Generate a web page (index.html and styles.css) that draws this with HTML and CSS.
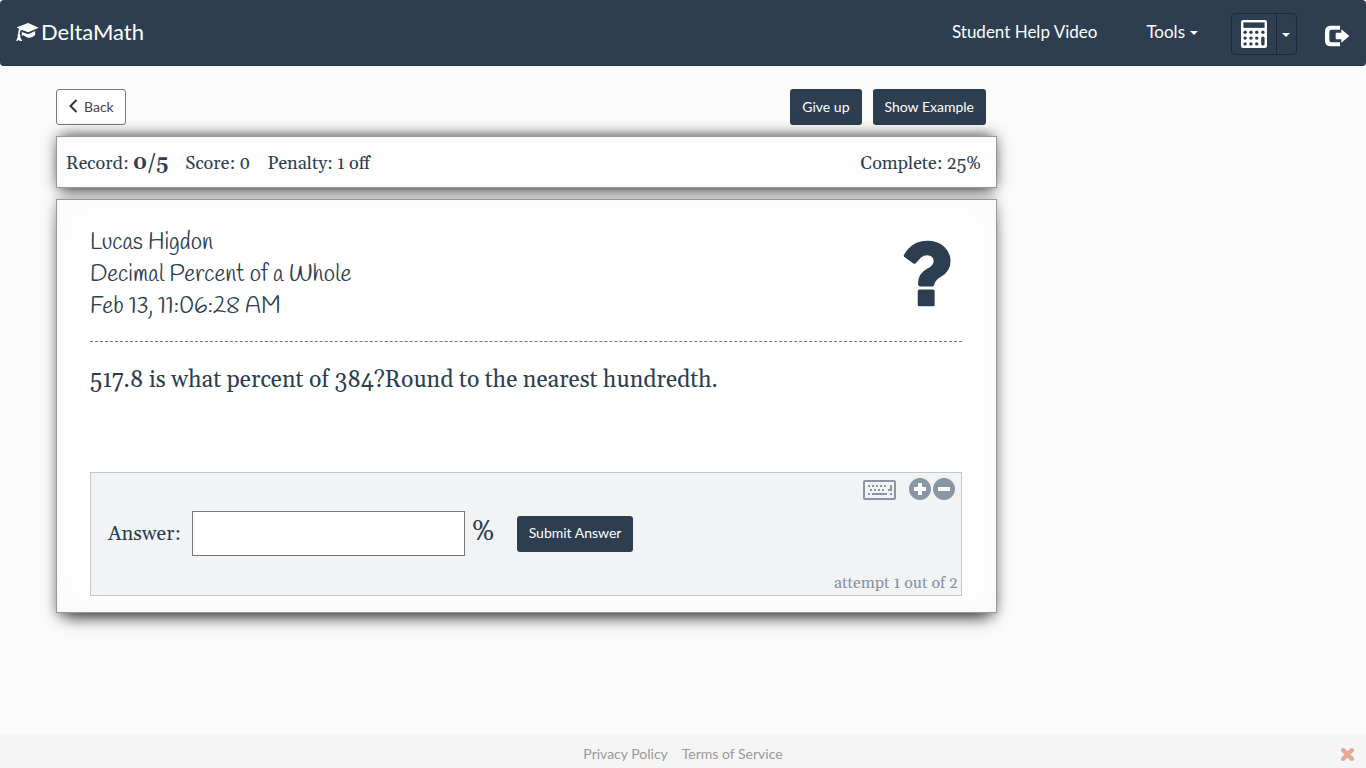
FILE: index.html
```html
<!DOCTYPE html>
<html lang="en">
<head>
    <meta charset="UTF-8">
    <meta name="viewport" content="width=device-width, initial-scale=1.0">
    <title>DeltaMath</title>
    <link rel="stylesheet" href="styles.css">
</head>
<body>
    <nav class="navbar">
        <a class="brand" href="#">
            <svg class="icon-cap" viewBox="0 0 68 54" aria-hidden="true">
                <path d="M36 0L68 14L36 28L20 22L14 22Q10 27 11 34Q15 38 12 42L18 54H11L7 50L4 54H0L5 41Q3 36 6 33Q6 23 9 18L2 13Z"/>
                <path d="M17 27L36 34L57 24V36Q47 46 36 44Q28 42 23 37L17 38Z"/>
            </svg>
            <span>DeltaMath</span>
        </a>
        <div class="nav-right">
            <a class="nav-link" href="#">Student Help Video</a>
            <a class="nav-link nav-tools" href="#">Tools <span class="caret"></span></a>
            <div class="btn-group">
                <button class="calc-btn" type="button" aria-label="Calculator">
                    <svg class="icon-calc" viewBox="0 0 76 82" aria-hidden="true">
                        <rect width="76" height="82" rx="6" fill="#fff"/>
                        <g fill="#2c3e50">
                            <rect x="7" y="7" width="62" height="16"/>
                            <circle cx="12" cy="36" r="5"/><circle cx="29" cy="36" r="5"/><circle cx="46" cy="36" r="5"/><circle cx="64" cy="36" r="5"/>
                            <circle cx="12" cy="53" r="5"/><circle cx="29" cy="53" r="5"/><circle cx="46" cy="53" r="5"/>
                            <circle cx="12" cy="70" r="5"/><circle cx="29" cy="70" r="5"/><circle cx="46" cy="70" r="5"/>
                            <rect x="59" y="48" width="10" height="27" rx="5"/>
                        </g>
                    </svg>
                </button>
                <button class="calc-btn calc-toggle" type="button" aria-label="Calculator options"><span class="caret"></span></button>
            </div>
            <a class="logout" href="#" aria-label="Log out">
                <svg class="icon-logout" viewBox="0 0 76 66" aria-hidden="true">
                    <path d="M47 2H20Q2 2 2 19V47Q2 64 20 64H47V52H22Q15 52 15 45V21Q15 14 22 14H47Z"/>
                    <path d="M51 13L75 33L51 53V43H37Q34 43 34 40V26Q34 23 37 23H51Z"/>
                </svg>
            </a>
        </div>
    </nav>

    <main class="container">
        <div class="toolbar">
            <button class="btn btn-default" type="button">
                <svg class="icon-back" viewBox="0 0 10 14" aria-hidden="true"><path d="M8 1L2 7L8 13"/></svg>
                Back
            </button>
            <div class="toolbar-right">
                <button class="btn btn-primary" type="button">Give up</button>
                <button class="btn btn-primary" type="button">Show Example</button>
            </div>
        </div>

        <section class="panel record">
            <span>Record: <b>0/5</b></span>
            <span>Score: 0</span>
            <span>Penalty: 1 off</span>
            <span class="complete">Complete: 25%</span>
        </section>

        <section class="panel problem">
            <header class="problem-header">
                <div class="student">
                    <div>Lucas Higdon</div>
                    <div>Decimal Percent of a Whole</div>
                    <div>Feb 13, 11:06:28 AM</div>
                </div>
                <svg class="icon-question" viewBox="130 58 144 202" aria-hidden="true">
                    <path d="M132 104Q155 60 203 60Q234 60 254 78Q273 96 273 121Q273 151 245 168Q225 179 224 194Q223 198 218 198H181Q175 198 175 190Q175 159 202 145Q222 135 222 122Q222 106 203 104Q192 104 184 111L168 128Q164 131 160 128L134 109Q131 107 132 104Z"/>
                    <rect x="174" y="207" width="51" height="51" rx="5"/>
                </svg>
            </header>

            <p class="question">517.8 is what percent of 384?Round to the nearest hundredth.</p>

            <form class="answer-box">
                <div class="answer-tools">
                    <button class="tool tool-keyboard" type="button" aria-label="Keyboard">
                        <svg class="icon-keyboard" viewBox="0 0 33 20" aria-hidden="true">
                            <rect x="1" y="1" width="31" height="18" rx="1" fill="none" stroke="#8b96a3" stroke-width="2"/>
                            <path d="M5 6H25M7 10H23M5 14H7M27 14H29" fill="none" stroke="#8b96a3" stroke-width="2" stroke-dasharray="2 2"/>
                            <path d="M9 14H24M28 5V10H25" fill="none" stroke="#8b96a3" stroke-width="2"/>
                        </svg>
                    </button>
                    <button class="tool" type="button" aria-label="Larger text">
                        <svg class="icon-round" viewBox="0 0 22 22" aria-hidden="true"><circle cx="11" cy="11" r="11" fill="#8b96a3"/><path d="M11 5V17M5 11H17" stroke="#fff" stroke-width="4"/></svg>
                    </button>
                    <button class="tool" type="button" aria-label="Smaller text">
                        <svg class="icon-round" viewBox="0 0 22 22" aria-hidden="true"><circle cx="11" cy="11" r="11" fill="#8b96a3"/><path d="M5 11H17" stroke="#fff" stroke-width="4"/></svg>
                    </button>
                </div>
                <div class="answer-row">
                    <label class="answer-label" for="answer">Answer:</label>
                    <input class="answer-input" type="text" id="answer" autocomplete="off">
                    <span class="percent">%</span>
                    <button class="btn btn-primary" type="submit">Submit Answer</button>
                </div>
                <div class="attempt">attempt 1 out of 2</div>
            </form>
        </section>
    </main>

    <footer class="footer">
        <a href="#">Privacy Policy</a>
        <a href="#">Terms of Service</a>
        <button class="footer-close" type="button" aria-label="Close">
            <svg class="icon-close" viewBox="0 0 12 12" aria-hidden="true"><path d="M2 2L10 10M10 2L2 10"/></svg>
        </button>
    </footer>
</body>
</html>
```
FILE: styles.css
```css
* {
    box-sizing: border-box;
}

html {
    background-color: #fff;
}

body {
    margin: 0;
    min-height: 100vh;
    display: flex;
    flex-direction: column;
    font-family: Lato, sans-serif;
    font-size: 14px;
    color: #2c3e50;
    background-color: #fbfbfb;
}

a {
    text-decoration: none;
}

button {
    font-family: Lato, sans-serif;
    cursor: pointer;
}

svg {
    display: block;
}

/* Navbar */
.navbar {
    display: flex;
    align-items: center;
    justify-content: space-between;
    height: 66px;
    padding: 0 16px 2px;
    background-color: #2c3e50;
    border-bottom: 1px solid #22303f;
    border-radius: 4px;
}

.brand {
    display: flex;
    align-items: center;
    gap: 2px;
    font-size: 22px;
    color: #fff;
}

.icon-cap {
    width: 23px;
    height: 18px;
    fill: #fff;
}

.nav-right {
    display: flex;
    align-items: center;
}

.nav-link {
    margin-right: 49px;
    font-size: 17px;
    color: #fff;
}

.nav-tools {
    display: flex;
    align-items: center;
    gap: 5px;
    margin-right: 33px;
}

.caret {
    display: inline-block;
    margin-top: 2px;
    border-top: 4px solid #fff;
    border-left: 4px solid transparent;
    border-right: 4px solid transparent;
}

.btn-group {
    display: flex;
    height: 42px;
    margin: 5px 27px 0 0;
    border: 1px solid #1c2938;
    border-radius: 4px;
}

.calc-btn {
    display: flex;
    align-items: center;
    padding: 0 9px;
    background: none;
    border: none;
}

.calc-toggle {
    padding: 0 6px 0 5px;
    border-left: 1px solid #1c2938;
}

.icon-calc {
    width: 26px;
    height: 28px;
}

.logout {
    margin-top: 9px;
}

.icon-logout {
    width: 26px;
    height: 22px;
    fill: #fff;
}

/* Page */
.container {
    flex: 1;
    width: 100%;
    max-width: 997px;
    padding: 23px 0 0 56px;
}

.toolbar {
    display: flex;
    justify-content: space-between;
    margin-bottom: 11px;
    padding-right: 11px;
}

.toolbar-right {
    display: flex;
    gap: 11px;
}

.btn {
    display: flex;
    align-items: center;
    height: 36px;
    padding: 0 12px 2px;
    font-size: 14px;
    border: none;
    border-radius: 3px;
}

.btn-default {
    gap: 5px;
    padding: 0 11px 2px;
    color: #444;
    background-color: #fff;
    border: 1px solid #777;
}

.btn-primary {
    color: #fff;
    background-color: #2c3e50;
}

.icon-back {
    width: 11px;
    height: 14px;
    fill: none;
    stroke: #333;
    stroke-width: 2;
}

.panel {
    position: relative;
    font-family: Gelasio, Georgia, "Liberation Serif", serif;
    background-color: #fff;
    border: 1px solid #999;
    box-shadow: 0 1px 12px rgba(0, 0, 0, 0.35), 0 12px 16px -8px rgba(0, 0, 0, 0.7), inset 0 0 40px rgba(0, 0, 0, 0.03);
}

.record {
    display: flex;
    align-items: baseline;
    gap: 17px;
    height: 52px;
    margin-bottom: 11px;
    padding: 12px 15px 0 9px;
    font-size: 18px;
    line-height: 28px;
    background-color: #fdfdfd;
    box-shadow: 0 0 14px rgba(0, 0, 0, 0.4), 0 -8px 14px -8px rgba(0, 0, 0, 0.5), 0 8px 12px -6px rgba(0, 0, 0, 0.6);
}

.record b {
    font-size: 20px;
}

.complete {
    margin-left: auto;
}

.problem {
    padding: 27px 34px 16px 33px;
}

.problem-header {
    display: flex;
    justify-content: space-between;
    padding-bottom: 18px;
    border-bottom: 1px dashed #777;
}

.student {
    font-family: "Handlee", Lato, sans-serif;
    font-size: 23px;
    line-height: 32px;
}

.icon-question {
    width: 48px;
    height: 67px;
    margin: 13px 11px 0 0;
    fill: #2c3e50;
}

.question {
    margin: 23px 0 75px;
    font-size: 23px;
    line-height: 32px;
}

.answer-box {
    padding: 4px 3px 0 17px;
    background-color: #f1f3f5;
    border: 1px solid #c5c7c9;
}

.answer-tools {
    display: flex;
    justify-content: flex-end;
    align-items: center;
    gap: 2px;
    padding-right: 3px;
}

.tool {
    padding: 0;
    background: none;
    border: none;
}

.tool-keyboard {
    margin: 3px 11px 0 0;
}

.icon-keyboard {
    width: 33px;
    height: 20px;
}

.icon-round {
    width: 22px;
    height: 22px;
}

.answer-row {
    display: flex;
    align-items: center;
    margin: 11px 0 16px;
    font-size: 20px;
}

.answer-input {
    width: 273px;
    height: 45px;
    margin: 0 7px 0 11px;
    padding: 0 8px;
    font-family: inherit;
    font-size: 20px;
    background-color: #fff;
    border: 1px solid #777;
    border-radius: 0;
}

.percent {
    margin-right: 22px;
    padding-bottom: 4px;
    font-size: 28px;
    line-height: 32px;
}

.attempt {
    font-size: 16px;
    line-height: 23px;
    text-align: right;
    color: #87919c;
}

/* Footer */
.footer {
    position: relative;
    display: flex;
    justify-content: center;
    align-items: center;
    gap: 14px;
    height: 34px;
    padding-top: 4px;
    background-color: #f5f5f5;
}

.footer a {
    color: #999;
}

.footer-close {
    position: absolute;
    right: 12px;
    top: 14px;
    padding: 0;
    background: none;
    border: none;
}

.icon-close {
    width: 13px;
    height: 13px;
    fill: none;
    stroke: #e8a793;
    stroke-width: 4;
    stroke-linecap: round;
}
```
